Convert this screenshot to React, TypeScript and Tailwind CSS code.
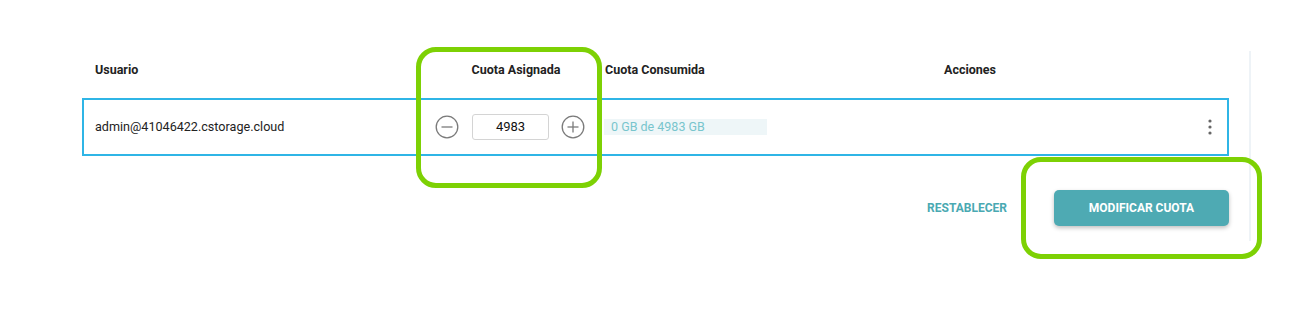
import React from "react";

const CircleIcon = ({ plus }: { plus?: boolean }) => (
  <svg width="24" height="24" viewBox="0 0 24 24" fill="none">
    <circle cx="12" cy="12" r="10.8" stroke="#7a7a7a" strokeWidth="1.3" />
    <line x1="6.5" y1="12" x2="17.5" y2="12" stroke="#7a7a7a" strokeWidth="1.3" />
    {plus && <line x1="12" y1="6.5" x2="12" y2="17.5" stroke="#7a7a7a" strokeWidth="1.3" />}
  </svg>
);

const Kebab = () => (
  <svg width="6" height="18" viewBox="0 0 6 18">
    <circle cx="3" cy="3" r="1.6" fill="#666" />
    <circle cx="3" cy="9" r="1.6" fill="#666" />
    <circle cx="3" cy="15" r="1.6" fill="#666" />
  </svg>
);

export default function App() {
  return (
    <div
      className="relative h-[323px] w-[1305px] bg-white"
      style={{ fontFamily: "Roboto, 'Liberation Sans', sans-serif" }}
    >
      <div className="pl-[82px] pt-[51px]">
        <div className="h-[190px] w-[1169px] border-r-2 border-[#eef3f7]">
          {/* header */}
          <div className="flex h-[47px] items-start pt-[11px] text-[12.5px] font-bold leading-[16px] text-[#222]">
            <div className="w-[345px] pl-[13px]">Usuario</div>
            <div className="w-[178px] text-center">Cuota Asignada</div>
            <div className="w-[265px]">Cuota Consumida</div>
            <div className="w-[200px] text-center">Acciones</div>
          </div>

          {/* row */}
          <div className="flex h-[58px] w-[1147px] items-center border-2 border-[#2fb5e6]">
            <div className="w-[351px] pl-[11px] text-[12.6px] text-[#222]">
              admin@41046422.cstorage.cloud
            </div>
            <CircleIcon />
            <div className="ml-[13px] flex h-[26px] w-[77px] items-center justify-center rounded-[3px] border border-[#d4d4d4] text-[13px] text-[#111]">
              4983
            </div>
            <div className="ml-[12px]">
              <CircleIcon plus />
            </div>
            <div className="ml-[19px] flex h-[16px] w-[163px] items-center bg-[#eef6f8] pl-[7px] text-[12.5px] text-[#78c5cd]">
              0 GB de 4983 GB
            </div>
            <div className="ml-auto mr-[14px] flex items-center">
              <Kebab />
            </div>
          </div>

          {/* actions */}
          <div className="mt-[34px] flex w-[1147px] items-center justify-end gap-[47px]">
            <button className="text-[12px] font-bold text-[#4aa9b2]">
              RESTABLECER
            </button>
            <button className="h-[36px] w-[175px] rounded-[5px] bg-[#4eaab3] text-[12px] font-bold text-white shadow-[0_2px_4px_rgba(0,0,0,0.25)]">
              MODIFICAR CUOTA
            </button>
          </div>
        </div>
      </div>

      {/* annotation highlights */}
      <div className="pointer-events-none absolute left-[416px] top-[47px] h-[141px] w-[186px] rounded-[20px] border-[5px] border-[#7dd104]" />
      <div className="pointer-events-none absolute left-[1021px] top-[157px] h-[102px] w-[241px] rounded-[20px] border-[5px] border-[#7dd104]" />
    </div>
  );
}
